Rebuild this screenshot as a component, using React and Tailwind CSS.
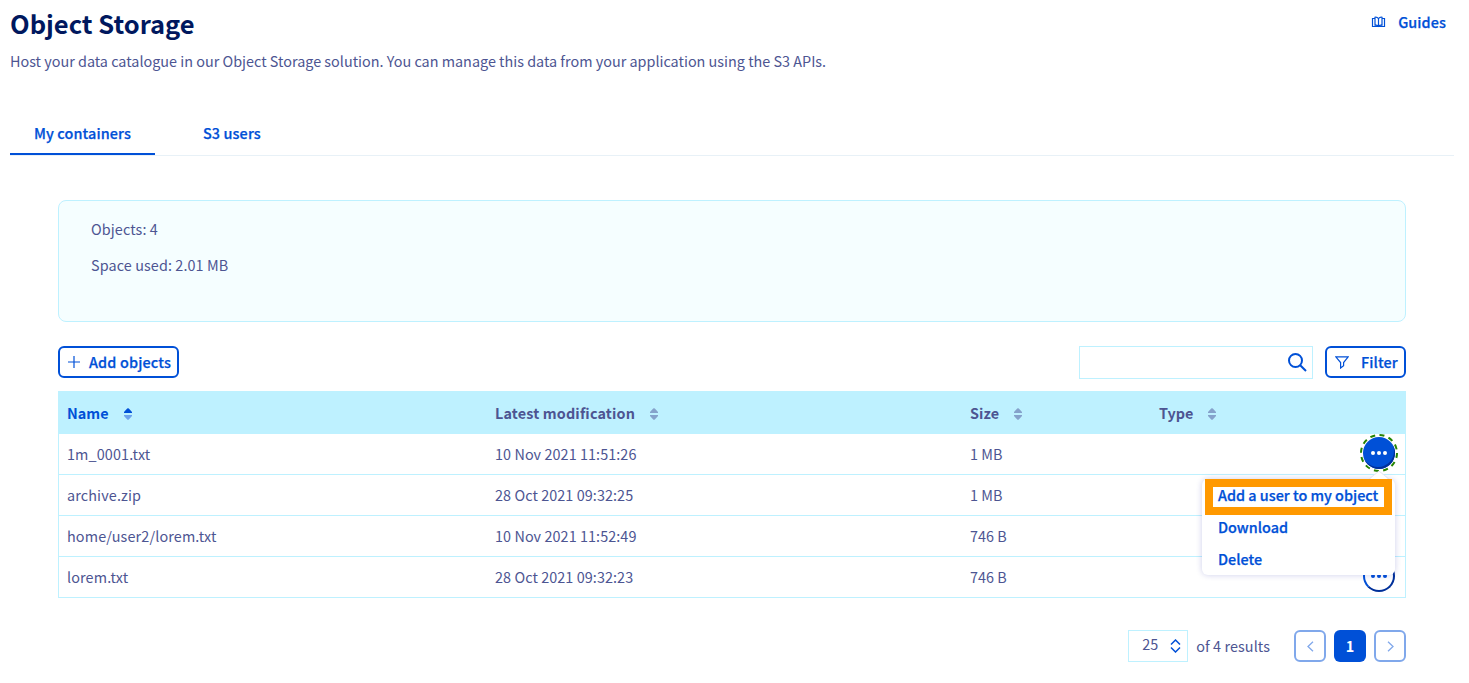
const files = [
  { name: '1m_0001.txt', date: '10 Nov 2021 11:51:26', size: '1 MB' },
  { name: 'archive.zip', date: '28 Oct 2021 09:32:25', size: '1 MB' },
  { name: 'home/user2/lorem.txt', date: '10 Nov 2021 11:52:49', size: '746 B' },
  { name: 'lorem.txt', date: '28 Oct 2021 09:32:23', size: '746 B' },
];

function SortIcon({ active }) {
  return (
    <svg width="8" height="12" viewBox="0 0 8 12" className="mt-px shrink-0">
      <path d="M0 5 V4 L3.2 0.6 Q4 0 4.8 0.6 L8 4 V5 Z" fill={active ? '#0050d7' : '#85a2cb'} />
      <path d="M0 7 V8 L3.2 11.4 Q4 12 4.8 11.4 L8 8 V7 Z" fill={active ? '#6ea3ec' : '#85a2cb'} />
    </svg>
  );
}

function HeaderCell({ label, active, spacing }) {
  return (
    <div className={`flex items-center font-bold ${spacing} ${active ? 'text-[#0050d7]' : ''}`}>
      <span>{label}</span>
      <SortIcon active={active} />
    </div>
  );
}

function Dots({ color }) {
  return (
    <svg width="16" height="4" viewBox="0 0 16 4" fill={color}>
      <circle cx="2" cy="2" r="2" />
      <circle cx="8" cy="2" r="2" />
      <circle cx="14" cy="2" r="2" />
    </svg>
  );
}

function ActionMenu() {
  return (
    <div className="absolute right-0 top-[42px] z-10 h-24 w-[193px] rounded-md bg-white font-medium text-[#0050d7] shadow-[0_0_6px_rgba(0,14,156,0.2)] [-webkit-text-stroke:0.25px]">
      <svg width="20" height="9" viewBox="0 0 20 9" className="absolute -top-2 right-[6px]">
        <path d="M0 9 L10 0 L20 9 Z" fill="#fff" />
        <path d="M0 8 L10 0 L20 8" fill="none" stroke="#e4e4f5" strokeWidth="1" />
      </svg>
      <div className="absolute left-[3px] top-0 h-9 w-[187px] border-8 border-[#ff9900]" />
      <ul className="relative pl-4 leading-8">
        <li>Add a user to my object</li>
        <li>Download</li>
        <li>Delete</li>
      </ul>
    </div>
  );
}

export default function App() {
  return (
    <div className="h-[683px] w-[1469px] overflow-hidden bg-white font-['Noto_Sans_CJK_SC','Source_Sans_Pro',sans-serif] text-[14.4px] leading-6 text-[#4d5592]">
      <header className="flex h-[82px] justify-between pl-2.5 pr-[23px]">
        <div>
          <h1 className="pt-[7px] text-[25.5px] font-bold leading-8 text-[#00185e]">Object Storage</h1>
          <p className="mt-2.5">Host your data catalogue in our Object Storage solution. You can manage this data from your application using the S3 APIs.</p>
        </div>
        <a className="mt-2.5 flex h-6 items-center gap-3 font-medium tracking-[0.1px] text-[#0050d7] [-webkit-text-stroke:0.25px]">
          <svg width="15" height="12" viewBox="0 0 15 12" fill="none" stroke="#0050d7" strokeWidth="1.2">
            <path d="M3.5 2.5H1.5V10.5H13.5V2.5H11.5M4 9.8V1.3C5.5 1 6.5 1.4 7.5 2.6C8.5 1.4 9.5 1 11 1.3V9.8M7.5 2.6V10.5M4 9.3C5.5 9 6.5 9.4 7.5 10.4C8.5 9.4 9.5 9 11 9.3" />
          </svg>
          <span>Guides</span>
        </a>
      </header>

      <nav className="ml-2.5 mr-[15px] mt-[31px] flex h-[43px] border-b border-[#e8f1f7] font-medium tracking-[0.12px] text-[#0050d7] [-webkit-text-stroke:0.25px]">
        <span className="h-[42px] w-[145px] border-b-2 border-[#0050d7] pt-2 text-center">My containers</span>
        <span className="ml-6 w-[106px] pl-6 pt-2">S3 users</span>
      </nav>

      <main className="ml-[58px] w-[1348px]">
        <section className="mt-11 h-[122px] rounded-lg border border-[#bef1ff] bg-[#f5feff] pl-8 pt-4 tracking-[0.1px]">
          <p>Objects: 4</p>
          <p className="mt-3">Space used: 2.01 MB</p>
        </section>

        <div className="mt-6 flex h-[33px] items-start [-webkit-text-stroke:0.25px]">
          <button className="flex h-8 w-[121px] items-center gap-[9px] rounded-md border-2 border-[#0050d7] pl-2 font-medium tracking-[0.16px] text-[#0050d7]">
            <svg width="12" height="12" viewBox="0 0 12 12" stroke="#0050d7" strokeWidth="1.2">
              <path d="M6 0V12M0 6H12" />
            </svg>
            <span className="whitespace-nowrap">Add objects</span>
          </button>
          <div className="ml-auto flex h-[33px] w-[234px] items-center justify-end border border-[#bef1ff] pb-px pr-[5px]">
            <svg width="20" height="20" viewBox="0 0 20 20" fill="none" stroke="#0050d7" strokeWidth="2">
              <circle cx="8.5" cy="8.5" r="6.5" />
              <path d="M13.2 13.2L19 19" />
            </svg>
          </div>
          <button className="ml-3 flex h-8 w-[81px] items-center gap-3 rounded-md border-2 border-[#0050d7] pl-2 font-medium tracking-[0.1px] text-[#0050d7]">
            <svg width="14" height="13" viewBox="0 0 14 13" fill="none" stroke="#0050d7" strokeWidth="1.2">
              <path d="M.8 .8H13.2L8.6 6.5V9.6L5.6 12V6.5Z" />
            </svg>
            <span>Filter</span>
          </button>
        </div>

        <div className="mt-3 border border-[#bef1ff]">
          <div className="grid h-[41px] grid-cols-[428px_475px_189px_1fr] items-center bg-[#bef1ff] pl-2 pt-px">
            <HeaderCell label="Name" active spacing="gap-[15px]" />
            <HeaderCell label="Latest modification" spacing="gap-[15px] tracking-[0.14px]" />
            <HeaderCell label="Size" spacing="gap-[15px] tracking-[0.1px]" />
            <HeaderCell label="Type" spacing="gap-[15px]" />
          </div>
          {files.map((file, i) => (
            <div key={file.name} className="relative grid h-[41px] grid-cols-[428px_475px_189px_1fr] items-center border-t border-[#bef1ff] pl-2">
              <span className="tracking-[0.13px]">{file.name}</span>
              <span className="tracking-[0.07px]">{file.date}</span>
              <span>{file.size}</span>
              <div className="relative -mt-0.5 mr-2.5 flex justify-end">
                {i === 0 && (
                  <button className="relative flex size-8 items-center justify-center rounded-full bg-[#0050d7] shadow-[inset_-1px_-2px_0_#00309a]">
                    <svg width="40" height="40" viewBox="0 0 40 40" className="absolute -left-1 -top-1">
                      <circle cx="20" cy="20" r="18" fill="none" stroke="#268403" strokeWidth="2" strokeDasharray="5 4.42" />
                    </svg>
                    <Dots color="#fff" />
                  </button>
                )}
                {i === 3 && (
                  <button className="flex size-8 items-center justify-center rounded-full border-2 border-[#0050d7] border-b-[#00309a] border-r-[#00309a]">
                    <Dots color="#0050d7" />
                  </button>
                )}
                {i === 0 && <ActionMenu />}
              </div>
            </div>
          ))}
        </div>

        <footer className="mt-8 flex h-8 items-center justify-end">
          <div className="flex h-8 w-[60px] items-center justify-end gap-3 border border-[#bef1ff] pr-1.5">
            <span className="pb-1">25</span>
            <svg width="11" height="14" viewBox="0 0 11 14" fill="none" stroke="#0050d7" strokeWidth="1.5">
              <path d="M1 5.5L5.5 1L10 5.5M1 8.5L5.5 13L10 8.5" />
            </svg>
          </div>
          <span className="ml-2 mr-6 whitespace-nowrap tracking-[0.08px]">of 4 results</span>
          <div className="flex gap-2">
            <button className="flex size-8 items-center justify-center rounded-md border-2 border-[#80a8eb]">
              <svg width="7" height="11" viewBox="0 0 7 11" fill="none" stroke="#80a8eb" strokeWidth="1.3">
                <path d="M6 .8L1 5.5L6 10.2" />
              </svg>
            </button>
            <button className="flex size-8 items-center justify-center rounded-md bg-[#0050d7] font-bold text-white">1</button>
            <button className="flex size-8 items-center justify-center rounded-md border-2 border-[#80a8eb]">
              <svg width="7" height="11" viewBox="0 0 7 11" fill="none" stroke="#80a8eb" strokeWidth="1.3">
                <path d="M1 .8L6 5.5L1 10.2" />
              </svg>
            </button>
          </div>
        </footer>
      </main>
    </div>
  );
}
